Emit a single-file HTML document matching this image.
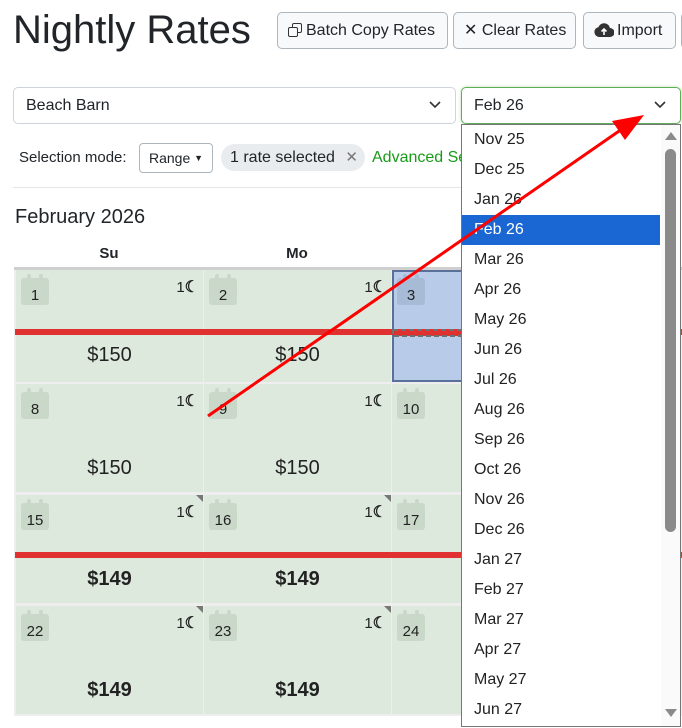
<!DOCTYPE html>
<html><head><meta charset="utf-8">
<style>
*{box-sizing:border-box;margin:0;padding:0}
body{width:682px;height:728px;overflow:hidden;background:#fff;font-family:"Liberation Sans",Arial,sans-serif;color:#212529;position:relative}
.a{position:absolute}
.btn{position:absolute;top:12px;height:37px;border:1px solid #adb5bd;border-radius:5px;background:#f8f9fa;font-size:16px;line-height:35px;padding-left:10px;color:#212529;white-space:nowrap;overflow:hidden}
.sel{position:absolute;top:87px;height:37px;border:1px solid #ced4da;border-radius:5px;font-size:16px;line-height:35px;padding-left:12px}
.cell{position:absolute;background:#dde9dc;width:187px}
.cal{position:absolute;left:5px;top:4px;width:28px;height:31px}
.cal .b{position:absolute;left:0;top:4px;width:28px;height:27px;background:#c9d8c9;border-radius:3px}
.cal .t1,.cal .t2{position:absolute;top:0;width:4px;height:7px;background:#c9d8c9;border-radius:2px}
.cal .t1{left:6px}.cal .t2{left:18px}
.cal .n{position:absolute;left:0;width:28px;top:13px;text-align:center;font-size:15px;color:#222}
.cal .n.l{left:-2px;width:32px}
.moon{position:absolute;right:4px;top:7px;font-size:15px;color:#222}
.moon b{font-size:16px}
.price{position:absolute;left:0;width:187px;text-align:center;font-size:20px;color:#222}
.tri{position:absolute;right:0;top:0;width:0;height:0;border-top:7px solid #777;border-left:7px solid transparent}
.redl{position:absolute;left:15px;width:667px;height:6px;background:#e03030}
.dd{position:absolute;left:461px;top:124px;width:220px;height:603px;background:#fff;border:1px solid #767676}
.it{position:absolute;left:0;width:198px;height:30px;line-height:30px;padding-left:12px;font-size:16px;color:#222}
</style></head><body>
<div class="a" style="left:13px;top:8px;font-size:40px;color:#212529">Nightly Rates</div>
<div class="btn" style="left:277px;width:171px"><span style="display:inline-block;width:14px;height:14px;position:relative;top:2px;margin-right:4px"><span class="a" style="left:4px;top:0;width:10px;height:10px;border:1.5px solid #333;border-radius:2px"></span><span class="a" style="left:0;top:4px;width:10px;height:10px;border:1.5px solid #333;border-radius:2px;background:#f8f9fa"></span></span>Batch Copy Rates</div>
<div class="btn" style="left:453px;width:123px">✕ Clear Rates</div>
<div class="btn" style="left:583px;width:93px"><svg width="20" height="14" viewBox="0 0 20 14" style="position:relative;top:2px;margin-right:3px"><path d="M5 14a5 5 0 0 1-.5-9.9A6 6 0 0 1 16 5a4.5 4.5 0 0 1 0 9z" fill="#333"/><path d="M10 12V6M7.5 8.5L10 6l2.5 2.5" stroke="#fff" stroke-width="1.6" fill="none"/></svg>Import</div>
<div class="btn" style="left:681px;width:20px"></div>

<div class="sel" style="left:13px;width:443px">Beach Barn<svg class="a" style="right:14px;top:13px" width="12" height="8" viewBox="0 0 12 8"><path d="M1 1l5 5 5-5" stroke="#333" stroke-width="1.6" fill="none"/></svg></div>
<div class="sel" style="left:461px;width:220px;border-color:#5fad56;box-shadow:0 0 3px #b8e0b0">Feb 26<svg class="a" style="right:14px;top:13px" width="12" height="8" viewBox="0 0 12 8"><path d="M1 1l5 5 5-5" stroke="#333" stroke-width="1.6" fill="none"/></svg></div>

<div class="a" style="left:19px;top:149px;font-size:15px">Selection mode:</div>
<div class="a" style="left:139px;top:143px;width:74px;height:30px;border:1px solid #adb5bd;border-radius:4px;font-size:14px;line-height:28px;padding-left:9px">Range <span style="font-size:9px;position:relative;top:-2px">▼</span></div>
<div class="a" style="left:221px;top:144px;width:144px;height:27px;background:#e9ecef;border-radius:14px;font-size:16px;line-height:27px;padding-left:9px">1 rate selected <span style="color:#777;margin-left:6px;font-size:15px">✕</span></div>
<div class="a" style="left:372px;top:149px;font-size:16px;color:#1a9a1a;width:89px;overflow:hidden;white-space:nowrap">Advanced Settings</div>
<div class="a" style="left:13px;top:187px;width:448px;height:1px;background:#e5e5e5"></div>

<div class="a" style="left:15px;top:206px;font-size:20px">February 2026</div>
<div class="a" style="left:15px;top:245px;width:188px;text-align:center;font-size:15px;font-weight:bold">Su</div>
<div class="a" style="left:203px;top:245px;width:188px;text-align:center;font-size:15px;font-weight:bold">Mo</div>
<div class="a" style="left:14px;top:267px;width:668px;height:3px;background:#cfcfcf"></div>
<div class="a" style="left:14px;top:270px;width:668px;height:446px;background:#eee"></div>

<div class="cell" style="left:16px;top:270px;height:112px"><div class="cal"><div class="t1"></div><div class="t2"></div><div class="b"></div><div class="n">1</div></div><div class="moon">1<b>☾</b></div><div class="price" style="top:74px">$150</div></div>
<div class="cell" style="left:204px;top:270px;height:112px"><div class="cal"><div class="t1"></div><div class="t2"></div><div class="b"></div><div class="n">2</div></div><div class="moon">1<b>☾</b></div><div class="price" style="top:74px">$150</div></div>
<div class="cell" style="left:392px;top:270px;height:112px;background:#b8cce9;border:2px solid #5a6f9a"><div class="cal" style="left:3px;top:2px"><div class="t1" style="background:#a7bbd6"></div><div class="t2" style="background:#a7bbd6"></div><div class="b" style="background:#a7bbd6"></div><div class="n">3</div></div></div>
<div class="cell" style="left:392px;top:384px;height:108px"><div class="cal"><div class="t1"></div><div class="t2"></div><div class="b"></div><div class="n l">10</div></div></div>
<div class="cell" style="left:392px;top:495px;height:108px"><div class="cal"><div class="t1"></div><div class="t2"></div><div class="b"></div><div class="n l">17</div></div></div>
<div class="cell" style="left:392px;top:606px;height:108px"><div class="cal"><div class="t1"></div><div class="t2"></div><div class="b"></div><div class="n l">24</div></div></div>
<div class="cell" style="left:16px;top:384px;height:108px"><div class="cal"><div class="t1"></div><div class="t2"></div><div class="b"></div><div class="n">8</div></div><div class="moon">1<b>☾</b></div><div class="price" style="top:73px">$150</div></div>
<div class="cell" style="left:204px;top:384px;height:108px"><div class="cal"><div class="t1"></div><div class="t2"></div><div class="b"></div><div class="n">9</div></div><div class="moon">1<b>☾</b></div><div class="price" style="top:73px">$150</div></div>
<div class="cell" style="left:16px;top:495px;height:108px"><div class="tri"></div><div class="cal"><div class="t1"></div><div class="t2"></div><div class="b"></div><div class="n l">15</div></div><div class="moon">1<b>☾</b></div><div class="price" style="top:73px;font-weight:bold">$149</div></div>
<div class="cell" style="left:204px;top:495px;height:108px"><div class="tri"></div><div class="cal"><div class="t1"></div><div class="t2"></div><div class="b"></div><div class="n l">16</div></div><div class="moon">1<b>☾</b></div><div class="price" style="top:73px;font-weight:bold">$149</div></div>
<div class="cell" style="left:16px;top:606px;height:108px"><div class="tri"></div><div class="cal"><div class="t1"></div><div class="t2"></div><div class="b"></div><div class="n l">22</div></div><div class="moon">1<b>☾</b></div><div class="price" style="top:73px;font-weight:bold">$149</div></div>
<div class="cell" style="left:204px;top:606px;height:108px"><div class="tri"></div><div class="cal"><div class="t1"></div><div class="t2"></div><div class="b"></div><div class="n l">23</div></div><div class="moon">1<b>☾</b></div><div class="price" style="top:73px;font-weight:bold">$149</div></div>

<div class="redl" style="top:329px"></div>
<svg class="a" style="left:392px;top:329px" width="69" height="8"><rect x="1" y="1" width="68" height="6" fill="#e03030" stroke="#707070" stroke-width="2" stroke-dasharray="5 3"/></svg>
<div class="redl" style="top:552px"></div>

<div class="dd">
<div class="it" style="top:0">Nov 25</div>
<div class="it" style="top:30px">Dec 25</div>
<div class="it" style="top:60px">Jan 26</div>
<div class="it" style="top:90px;background:#1a66d2;color:#fff">Feb 26</div>
<div class="it" style="top:120px">Mar 26</div>
<div class="it" style="top:150px">Apr 26</div>
<div class="it" style="top:180px">May 26</div>
<div class="it" style="top:210px">Jun 26</div>
<div class="it" style="top:240px">Jul 26</div>
<div class="it" style="top:270px">Aug 26</div>
<div class="it" style="top:300px">Sep 26</div>
<div class="it" style="top:330px">Oct 26</div>
<div class="it" style="top:360px">Nov 26</div>
<div class="it" style="top:390px">Dec 26</div>
<div class="it" style="top:420px">Jan 27</div>
<div class="it" style="top:450px">Feb 27</div>
<div class="it" style="top:480px">Mar 27</div>
<div class="it" style="top:510px">Apr 27</div>
<div class="it" style="top:540px">May 27</div>
<div class="it" style="top:570px">Jun 27</div>
<div class="a" style="left:199px;top:0;width:19px;height:601px;background:#fafafa"></div>
<div class="a" style="left:203px;top:7px;width:0;height:0;border-left:6px solid transparent;border-right:6px solid transparent;border-bottom:8px solid #8a8a8a"></div>
<div class="a" style="left:203px;top:24px;width:11px;height:383px;background:#8a8a8a;border-radius:6px"></div>
<div class="a" style="left:203px;top:584px;width:0;height:0;border-left:6px solid transparent;border-right:6px solid transparent;border-top:8px solid #8a8a8a"></div>
</div>

<svg class="a" style="left:0;top:0" width="682" height="728"><line x1="208" y1="416" x2="622" y2="129" stroke="#ff0000" stroke-width="3"/><polygon points="644,115 612,121 625,140" fill="#ff0000"/></svg>
</body></html>
